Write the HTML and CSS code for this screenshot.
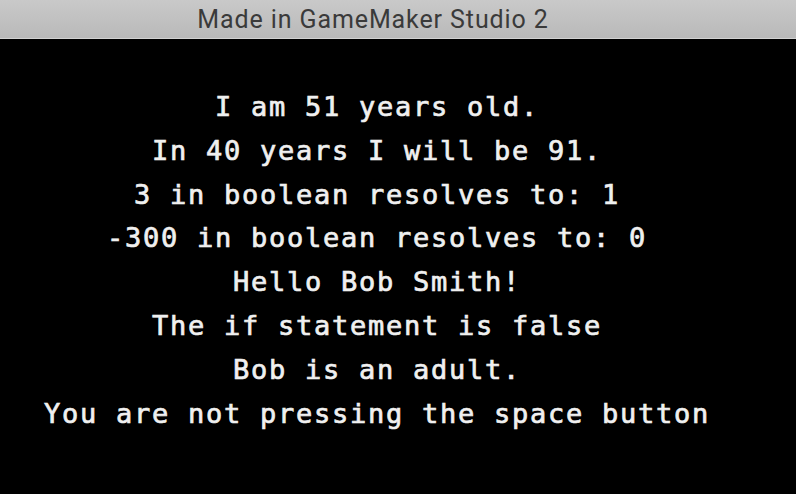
FILE: index.html
```html
<!DOCTYPE html>
<html>
<head>
<meta charset="utf-8">
<link rel="stylesheet" href="styles.css">
</head>
<body>
<div class="window">
  <div class="titlebar"><span class="title">Made in GameMaker Studio 2</span></div>
  <div class="game">
    <div class="lines">
      <div class="line">I am 51 years old.</div>
      <div class="line">In 40 years I will be 91.</div>
      <div class="line">3 in boolean resolves to: 1</div>
      <div class="line">-300 in boolean resolves to: 0</div>
      <div class="line">Hello Bob Smith!</div>
      <div class="line">The if statement is false</div>
      <div class="line">Bob is an adult.</div>
      <div class="line">You are not pressing the space button</div>
    </div>
  </div>
</div>
</body>
</html>
```
FILE: styles.css
```css
html, body {
  margin: 0;
  padding: 0;
  background: #000;
}
.window {
  width: 796px;
  height: 494px;
  display: flex;
  flex-direction: column;
  overflow: hidden;
}
.titlebar {
  height: 38px;
  flex: none;
  background: linear-gradient(#c9c9c9, #b9b9b9);
  border-bottom: 1px solid #d2d2d2;
  box-shadow: 0 1px 0 #8e8e8e;
  display: flex;
  align-items: center;
  padding-right: 50px;
  justify-content: center;
}
.title {
  font-family: Roboto, "Liberation Sans", sans-serif;
  font-size: 25px;
  letter-spacing: 0.9px;
  color: #3a3a3a;
  padding-top: 1px;
}
.game {
  flex: 1;
  background: #000;
  padding-top: 46px;
  padding-right: 42px;
}
.lines {
  display: flex;
  flex-direction: column;
  align-items: center;
}
.line {
  font-family: "DejaVu Sans Mono", monospace;
  font-size: 27px;
  letter-spacing: 1.75px;
  line-height: 43.8px;
  color: #f0f0f0;
  -webkit-text-stroke: 0.7px #f0f0f0;
  white-space: pre;
}
```
